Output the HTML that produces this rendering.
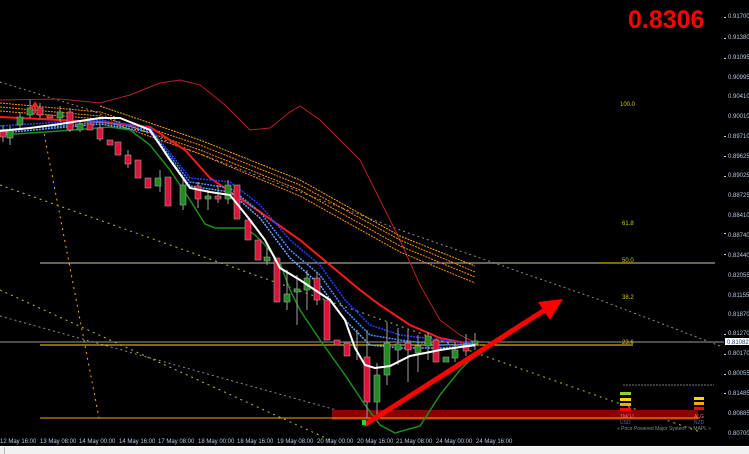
<!DOCTYPE html>
<html><head><meta charset="utf-8"><style>
html,body{margin:0;padding:0;background:#000;width:749px;height:454px;overflow:hidden}
svg{display:block}
text{font-family:"Liberation Sans",sans-serif}
</style></head><body>
<svg width="749" height="454" viewBox="0 0 749 454" xmlns="http://www.w3.org/2000/svg">
<rect width="749" height="454" fill="#000"/>
<polyline points="0,82 90,110 190,150 400,230 600,300 720,346" fill="none" stroke="#8a8a8a" stroke-width="1" stroke-dasharray="2,3"/>
<polyline points="0,316 365,418" fill="none" stroke="#8a8a8a" stroke-width="1" stroke-dasharray="2,3"/>
<polyline points="0,185 700,432" fill="none" stroke="#9acd32" stroke-width="1" stroke-dasharray="2,4"/>
<polyline points="0,290 330,440" fill="none" stroke="#9acd32" stroke-width="1" stroke-dasharray="2,4"/>
<polyline points="43,128 99,418" fill="none" stroke="#ffa500" stroke-width="1" stroke-dasharray="2,4"/>
<line x1="40" y1="263" x2="715" y2="263" stroke="#c8c8b4" stroke-width="1"/>
<line x1="0" y1="342" x2="724" y2="342" stroke="#9a9a9a" stroke-width="1"/>
<line x1="40" y1="345" x2="633" y2="345" stroke="#ffd700" stroke-width="1"/>
<line x1="600" y1="263" x2="633" y2="263" stroke="#ffd700" stroke-width="1"/>
<line x1="623" y1="385" x2="714" y2="385" stroke="#777" stroke-width="1" stroke-dasharray="2,1"/>
<rect x="332" y="410" width="366" height="10" fill="#8b0000"/>
<line x1="40" y1="418" x2="700" y2="418" stroke="#ffa500" stroke-width="1"/>
<polyline points="0,100 60,99 100,103 130,95 160,83 180,80 200,85 225,105 250,130 270,128 290,112 300,106 320,120 340,140 360,160 380,200 400,240 420,285 440,320 460,335 480,345" fill="none" stroke="#b22222" stroke-width="1"/>
<g fill="none" stroke="#ff8c00" stroke-width="1" stroke-dasharray="2,1">
<polyline points="0,103 100,112 200,145 300,185 400,240 475,272"/>
<polyline points="0,107 100,116 200,150 300,190 400,246 475,277"/>
<polyline points="0,111 100,119 200,154 300,196 400,252 475,283"/>
<polyline points="100,106 200,140 300,180 400,236 475,266" stroke="#ffa500"/>
</g>
<polyline points="0,117 100,122 150,127 185,150 210,178 260,212 300,240 330,265 360,290 380,305 410,325 440,338 475,345" fill="none" stroke="#ff1a1a" stroke-width="2"/>
<g fill="none" stroke-dasharray="2,1" stroke-width="1.5">
<polyline points="0,126 60,122 100,120 150,128 190,178 230,182 260,205 290,240 320,265 345,300 370,325 400,335 440,340 475,343" stroke="#2040ff"/>
<polyline points="0,130 60,126 100,122 150,130 190,182 230,188 260,212 290,250 320,275 345,310 370,335 400,340 440,345 475,344" stroke="#4a8cff"/>
<polyline points="0,133 100,124 150,132 190,186 230,192 260,218 290,258 320,285 345,320 370,345 400,348 440,348 475,346" stroke="#6aa8ff"/>
</g>
<polyline points="0,135 60,131 110,127 130,130 150,145 170,170 190,200 205,224 215,228 245,228 255,235 265,245 280,263 290,290 300,310 320,340 345,375 365,405 380,425 395,433 420,426 440,395 460,370 475,355" fill="none" stroke="#1e8c1e" stroke-width="1.5"/>
<g stroke="#a0a0a0" stroke-width="1">
<line x1="3" y1="125" x2="3" y2="142"/><line x1="10" y1="126" x2="10" y2="145"/><line x1="20" y1="112" x2="20" y2="128"/><line x1="30" y1="100" x2="30" y2="118"/><line x1="40" y1="103" x2="40" y2="118"/><line x1="60" y1="106" x2="60" y2="122"/><line x1="70" y1="108" x2="70" y2="132"/><line x1="80" y1="120" x2="80" y2="132"/><line x1="100" y1="125" x2="100" y2="141"/><line x1="128" y1="150" x2="128" y2="168"/><line x1="160" y1="170" x2="160" y2="192"/><line x1="183" y1="180" x2="183" y2="210"/><line x1="198" y1="182" x2="198" y2="208"/><line x1="208" y1="190" x2="208" y2="210"/><line x1="218" y1="185" x2="218" y2="203"/><line x1="228" y1="180" x2="228" y2="204"/><line x1="267" y1="248" x2="267" y2="265"/><line x1="287" y1="270" x2="287" y2="310"/><line x1="297" y1="275" x2="297" y2="325"/><line x1="307" y1="270" x2="307" y2="310"/><line x1="317" y1="272" x2="317" y2="305"/><line x1="357" y1="330" x2="357" y2="360"/><line x1="367" y1="330" x2="367" y2="418"/><line x1="377" y1="363" x2="377" y2="415"/><line x1="387" y1="322" x2="387" y2="385"/><line x1="398" y1="328" x2="398" y2="365"/><line x1="408" y1="330" x2="408" y2="382"/><line x1="418" y1="335" x2="418" y2="372"/><line x1="428" y1="332" x2="428" y2="360"/><line x1="455" y1="342" x2="455" y2="362"/><line x1="466" y1="334" x2="466" y2="356"/><line x1="475" y1="333" x2="475" y2="350"/>
</g>
<g fill="#dc143c" stroke="#a0a0a0" stroke-width="0.6">
<rect x="0" y="130" width="6" height="7"/><rect x="37" y="108" width="6" height="7"/><rect x="47" y="115" width="6" height="3"/><rect x="67" y="112" width="6" height="18"/><rect x="87" y="124" width="6" height="6"/><rect x="97" y="128" width="6" height="11"/><rect x="107" y="140" width="6" height="5"/><rect x="115" y="142" width="6" height="13"/><rect x="125" y="155" width="6" height="9"/><rect x="135" y="160" width="6" height="18"/><rect x="145" y="178" width="6" height="10"/><rect x="165" y="177" width="6" height="29"/><rect x="195" y="186" width="6" height="13"/><rect x="215" y="196" width="6" height="3"/><rect x="234" y="185" width="6" height="34"/><rect x="245" y="220" width="6" height="20"/><rect x="255" y="240" width="6" height="20"/><rect x="274" y="258" width="6" height="44"/><rect x="314" y="278" width="6" height="22"/><rect x="324" y="300" width="6" height="40"/><rect x="334" y="340" width="6" height="5"/><rect x="344" y="343" width="6" height="13"/><rect x="364" y="357" width="6" height="45"/><rect x="405" y="343" width="6" height="7"/><rect x="433" y="340" width="6" height="22"/><rect x="463" y="346" width="6" height="5"/>
</g>
<g fill="#228b22" stroke="#a0a0a0" stroke-width="0.6">
<rect x="7" y="130" width="6" height="8"/><rect x="17" y="117" width="6" height="8"/><rect x="27" y="108" width="6" height="7"/><rect x="57" y="112" width="6" height="6"/><rect x="77" y="124" width="6" height="6"/><rect x="155" y="178" width="6" height="8"/><rect x="180" y="185" width="6" height="20"/><rect x="205" y="196" width="6" height="3"/><rect x="225" y="185" width="6" height="14"/><rect x="264" y="257" width="6" height="4"/><rect x="284" y="294" width="6" height="8"/><rect x="294" y="289" width="6" height="3"/><rect x="304" y="278" width="6" height="12"/><rect x="374" y="375" width="6" height="27"/><rect x="384" y="343" width="6" height="32"/><rect x="395" y="344" width="6" height="6"/><rect x="415" y="346" width="6" height="7"/><rect x="425" y="336" width="6" height="10"/><rect x="443" y="357" width="6" height="5"/><rect x="452" y="350" width="6" height="8"/><rect x="472" y="341" width="6" height="3"/>
</g>
<polyline points="0,131 30,128 60,124 100,118 120,118 150,130 170,160 190,188 210,192 230,195 250,220 265,240 280,268 300,280 330,300 345,320 355,348 365,365 375,368 390,366 410,356 440,350 475,345" fill="none" stroke="#fff" stroke-width="2"/>
<path d="M31 109 l4 -6 l4 6 M35 103 v10" stroke="#ff2020" stroke-width="2" fill="none"/>
<line x1="366" y1="424" x2="548" y2="308" stroke="#ff0000" stroke-width="5" stroke-linecap="round"/>
<polygon points="563,299 538,302 550,320" fill="#ff0000"/>
<rect x="362" y="420" width="4" height="5" fill="#22dd22"/>
<g font-size="6" fill="#cccc00">
<text x="620" y="106">100.0</text><text x="622" y="225">61.8</text><text x="622" y="262">50.0</text><text x="622" y="299">38.2</text><text x="622" y="344">23.6</text>
</g>
<rect x="620" y="392" width="11" height="3" fill="#9acd32"/><rect x="620" y="398" width="11" height="3" fill="#ffd700"/><rect x="620" y="403" width="11" height="3" fill="#ffa500"/><rect x="620" y="408" width="11" height="3" fill="#ff0000"/>
<rect x="694" y="397" width="10" height="3" fill="#ffd700"/><rect x="694" y="402" width="10" height="3" fill="#ffa500"/><rect x="694" y="407" width="10" height="3" fill="#ff0000"/>
<g font-size="5" fill="#888"><text x="620" y="418" fill="#ff7060">TMOJ</text><text x="620" y="424" fill="#6060c0">USD</text><text x="694" y="418" fill="#ff7060">ALG</text><text x="694" y="424" fill="#6060c0">NZD</text><text x="617" y="430">« Price Powered Major System ™ MAPL »</text></g>
<g font-size="6" fill="#b8c8e0">
<text x="728" y="18">0.91700</text><text x="728" y="39">0.91380</text><text x="728" y="59">0.91095</text><text x="728" y="79">0.90995</text><text x="728" y="98">0.90410</text><text x="728" y="118">0.90010</text><text x="728" y="138">0.89710</text><text x="728" y="158">0.89625</text><text x="728" y="177">0.89025</text><text x="728" y="197">0.88725</text><text x="728" y="217">0.88410</text><text x="728" y="237">0.88740</text><text x="728" y="257">0.82440</text><text x="728" y="277">0.82055</text><text x="728" y="297">0.81155</text><text x="728" y="316">0.81870</text><text x="728" y="335">0.81270</text><text x="728" y="355">0.80170</text><text x="728" y="375">0.80055</text><text x="728" y="395">0.81485</text><text x="728" y="415">0.80885</text><text x="728" y="435">0.80700</text>
</g>
<g fill="#ccc"><rect x="724" y="17" width="2" height="1"/><rect x="724" y="38" width="2" height="1"/><rect x="724" y="58" width="2" height="1"/><rect x="724" y="136" width="2" height="1"/><rect x="724" y="156" width="2" height="1"/><rect x="724" y="176" width="2" height="1"/><rect x="724" y="233" width="2" height="1"/><rect x="724" y="254" width="2" height="1"/><rect x="724" y="334" width="2" height="1"/><rect x="724" y="354" width="2" height="1"/><rect x="724" y="374" width="2" height="1"/><rect x="724" y="393" width="2" height="1"/></g>
<rect x="725" y="338" width="24" height="7" fill="#fff"/>
<text x="727" y="344" font-size="6" fill="#1a3a8a">0.81082</text>
<text x="628" y="28" font-size="25" font-weight="bold" fill="#ff0000">0.8306</text>
<g font-size="6" fill="#b8c8e0">
<text x="0" y="443">12 May 16:00</text><text x="40" y="443">13 May 08:00</text><text x="79" y="443">14 May 00:00</text><text x="119" y="443">14 May 16:00</text><text x="158" y="443">17 May 08:00</text><text x="198" y="443">18 May 00:00</text><text x="237" y="443">18 May 16:00</text><text x="277" y="443">19 May 08:00</text><text x="317" y="443">20 May 00:00</text><text x="357" y="443">20 May 16:00</text><text x="396" y="443">21 May 08:00</text><text x="436" y="443">24 May 00:00</text><text x="476" y="443">24 May 16:00</text>
</g>
<rect x="0" y="446" width="749" height="1" fill="#fff"/>
<rect x="0" y="447" width="749" height="7" fill="#f0f0f0"/>
<rect x="4" y="447" width="1" height="7" fill="#bbb"/>
</svg>
</body></html>
